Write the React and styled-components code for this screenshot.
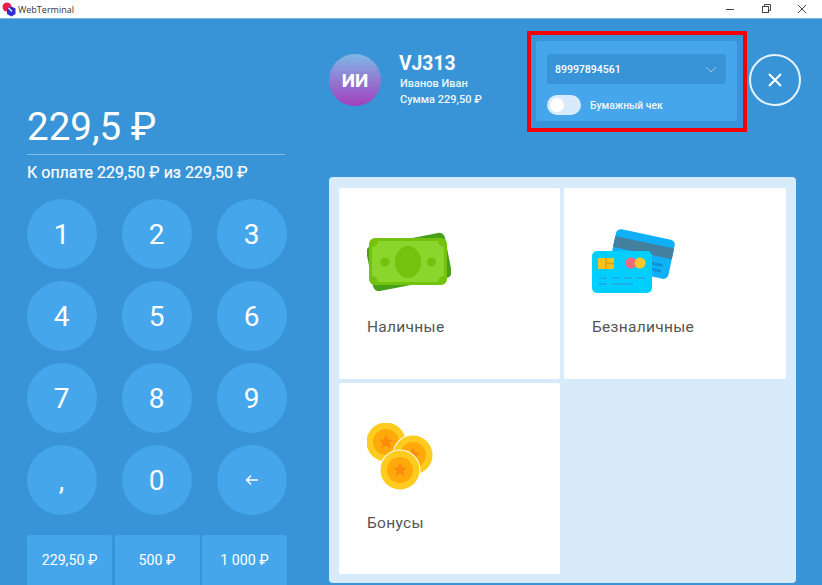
import React from "react";
import styled, { createGlobalStyle } from "styled-components";

const GlobalStyle = createGlobalStyle`
  html, body {
    margin: 0;
    padding: 0;
    height: 585px;
    overflow: hidden;
    background: #3894d6;
    font-family: Roboto, "Liberation Sans", sans-serif;
  }
`;

const Window = styled.div`
  width: 822px;
  height: 585px;
  display: flex;
  flex-direction: column;
  overflow: hidden;
`;

const TitleBar = styled.header`
  height: 18px;
  flex: none;
  display: flex;
  align-items: center;
  background: #fff;
  border-bottom: 1px solid #7fb6de;
  padding: 0 2px;
`;

const TitleText = styled.span`
  margin-left: 2px;
  font-family: "Open Sans", "Liberation Sans", sans-serif;
  font-size: 9px;
  color: #333;
`;

const WindowButtons = styled.div`
  margin-left: auto;
  display: flex;
`;

const WindowButton = styled.div`
  width: 36px;
  height: 18px;
  display: flex;
  align-items: center;
  justify-content: center;
`;

const Main = styled.main`
  flex: 1;
  display: flex;
  min-height: 0;
`;

const LeftColumn = styled.section`
  width: 302px;
  flex: none;
  box-sizing: border-box;
  padding: 84px 0 0 27px;
  display: flex;
  flex-direction: column;
`;

const Amount = styled.div`
  width: 258px;
  height: 52px;
  line-height: 48px;
  font-size: 38.5px;
  color: #fff;
  border-bottom: 1px solid #85bfe9;
`;

const ToPay = styled.div`
  margin-top: 8px;
  font-size: 16px;
  line-height: 19px;
  color: #fff;
  white-space: nowrap;
  -webkit-text-stroke: 0.2px #fff;
`;

const Keypad = styled.div`
  margin-top: 17px;
  display: grid;
  grid-template-columns: repeat(3, 70px);
  grid-auto-rows: 70px;
  column-gap: 25px;
  row-gap: 12px;
`;

const Key = styled.button`
  border: none;
  padding: 0 1px 0 0;
  border-radius: 50%;
  background: #45a6ec;
  color: #fff;
  font-family: inherit;
  font-size: 28px;
  display: flex;
  align-items: center;
  justify-content: center;
`;

const QuickRow = styled.div`
  margin-top: 20px;
  width: 260px;
  display: grid;
  grid-template-columns: 85px 85px 85px;
  column-gap: 2.5px;
`;

const QuickButton = styled.button`
  height: 50px;
  border: none;
  padding: 0;
  border-radius: 3px 3px 0 0;
  background: #45a6ec;
  color: #fff;
  font-family: inherit;
  font-size: 14.2px;
`;

const RightColumn = styled.section`
  flex: 1;
  box-sizing: border-box;
  padding: 12px 26px 1px 27px;
  display: flex;
  flex-direction: column;
`;

const TopRow = styled.div`
  display: flex;
  align-items: flex-start;
  height: 146px;
  flex: none;
`;

const Avatar = styled.div`
  width: 52px;
  height: 52px;
  margin-top: 23px;
  flex: none;
  border-radius: 50%;
  background: linear-gradient(180deg, #7fb8e6 0%, #a23fbc 100%);
  color: #fff;
  font-size: 19px;
  font-weight: 700;
  display: flex;
  align-items: center;
  justify-content: center;
`;

const Client = styled.div`
  margin: 21px 0 0 18px;
  width: 128px;
  flex: none;
  color: #fff;
`;

const ClientCode = styled.div`
  font-size: 19.3px;
  line-height: 24px;
  font-weight: 700;
`;

const ClientLine = styled.div`
  font-size: 11px;
  line-height: 16px;
  font-weight: 500;
  white-space: nowrap;
  color: #eef6fc;
  padding-left: 1px;
`;

const Highlight = styled.div`
  width: 220px;
  height: 101px;
  flex: none;
  box-sizing: border-box;
  border: 4px solid #f40009;
  padding: 6px 6px 6px 5px;
`;

const ReceiptPanel = styled.div`
  height: 80px;
  box-sizing: border-box;
  border-radius: 3px;
  background: #45a6ec;
  padding: 13px 11px 0;
`;

const PhoneSelect = styled.div`
  height: 30px;
  border-radius: 3px;
  background: #3894d6;
  display: flex;
  align-items: center;
  justify-content: space-between;
  padding: 0 9px 0 8px;
  color: #fff;
  font-size: 10.5px;
  font-weight: 500;
`;

const ToggleRow = styled.div`
  margin-top: 11px;
  display: flex;
  align-items: center;
  gap: 9px;
  color: #eef6fc;
  font-size: 10.3px;
  font-weight: 500;
`;

const Toggle = styled.div`
  width: 34px;
  height: 20px;
  border-radius: 10px;
  background: #d8ebfa;
  display: flex;
  align-items: center;
  padding-left: 2px;
  box-sizing: border-box;
`;

const ToggleKnob = styled.div`
  width: 14px;
  height: 14px;
  margin-left: 1px;
  border-radius: 50%;
  background: #fff;
`;

const CloseButton = styled.button`
  width: 52px;
  height: 52px;
  margin: 23px 0 0 2px;
  flex: none;
  padding: 0;
  border: 2px solid #e6f2fb;
  border-radius: 50%;
  background: transparent;
  display: flex;
  align-items: center;
  justify-content: center;
`;

const MethodsPanel = styled.div`
  width: 467px;
  height: 406px;
  box-sizing: border-box;
  padding: 11px 10px 9px;
  border-radius: 4px;
  background: #d8ebfa;
  display: grid;
  grid-template-columns: 221px 222px;
  grid-auto-rows: 191px;
  gap: 4px;
`;

const MethodCard = styled.div`
  background: #fff;
  border-radius: 2px;
  padding: ${(p) => p.$top}px 0 0 ${(p) => p.$left}px;
  display: flex;
  flex-direction: column;
  align-items: flex-start;
`;

const MethodIcon = styled.div`
  height: 70px;
  display: flex;
`;

const MethodLabel = styled.div`
  margin-top: ${(p) => p.$gap}px;
  font-size: 15.5px;
  line-height: 20px;
  letter-spacing: 0.3px;
  color: #555;
`;

const Logo = () => (
  <svg width="14" height="15" viewBox="0 0 14 15">
    <circle cx="5" cy="5" r="4.5" fill="#ee1c4e" />
    <path d="M5 6.5 L9.5 4.5 L13.5 6.5 V12 L9.5 14.5 L5 12 Z" fill="#2b2ecb" />
    <path d="M6.5 6 L10 9.5" stroke="#fff" strokeWidth="1.2" />
  </svg>
);

const MinimizeIcon = () => (
  <svg width="10" height="10" viewBox="0 0 10 10">
    <path d="M1 5.5 H9" stroke="#444" strokeWidth="1" />
  </svg>
);

const RestoreIcon = () => (
  <svg width="10" height="10" viewBox="0 0 10 10" fill="none" stroke="#444" strokeWidth="1">
    <rect x="1.5" y="2.5" width="6" height="6" />
    <path d="M3.5 2.5 V0.5 H9.5 V6.5 H7.5" />
  </svg>
);

const CloseSmallIcon = () => (
  <svg width="10" height="10" viewBox="0 0 10 10">
    <path d="M1 1 L9 9 M9 1 L1 9" stroke="#444" strokeWidth="1" />
  </svg>
);

const CashIcon = () => (
  <svg width="84" height="64" viewBox="0 0 84 64">
    <g transform="rotate(-11 42 32)">
      <rect x="2" y="9" width="80" height="46" rx="6" fill="#48a01a" />
    </g>
    <rect x="2" y="8" width="78" height="47" rx="6" fill="#73c20e" />
    <path
      d="M11 11 H71 A6 6 0 0 0 77 17 V46 A6 6 0 0 0 71 52 H11 A6 6 0 0 0 5 46 V17 A6 6 0 0 0 11 11 Z"
      fill="#8ad62d"
    />
    <ellipse cx="41" cy="32" rx="13" ry="16" fill="#73c20e" />
    <circle cx="18" cy="32" r="4.5" fill="#73c20e" />
    <circle cx="64.5" cy="32" r="4.5" fill="#73c20e" />
  </svg>
);

const CardsIcon = () => (
  <svg width="83" height="65" viewBox="0 0 83 65">
    <g transform="rotate(12 50 26)">
      <rect x="20" y="5" width="60" height="40" rx="5" fill="#0fb0f5" />
      <rect x="20" y="13" width="60" height="11" fill="#437f9e" />
      <path d="M60 32 H72 M60 38 H72" stroke="#0a8fd8" strokeWidth="2.5" />
    </g>
    <rect x="0" y="22" width="60" height="42" rx="5" fill="#00cffd" />
    <rect x="6" y="29" width="16" height="11" rx="1" fill="#f9c21a" />
    <path d="M14 29 V40 M14 34.5 H22" stroke="#eb9b0e" strokeWidth="1.5" />
    <circle cx="39" cy="34" r="5.5" fill="#f26a7a" />
    <circle cx="48" cy="34" r="5.5" fill="#fcc92c" />
    <path
      d="M7 49 H15 M20 49 H28 M32 49 H40 M45 49 H53 M7 55 H15 M20 55 H41"
      stroke="#1bb3e6"
      strokeWidth="2.2"
    />
  </svg>
);

const STAR =
  "M0 -7.5 L2.2 -2.6 L7.2 -2.2 L3.4 1.2 L4.6 6.4 L0 3.6 L-4.6 6.4 L-3.4 1.2 L-7.2 -2.2 L-2.2 -2.6 Z";

const Coin = ({ x, y }) => (
  <g transform={`translate(${x} ${y})`}>
    <circle r="19.5" fill="#ffcb1f" />
    <circle r="13" fill="#ffa90a" />
    <path d={STAR} fill="#ff8a0c" />
  </g>
);

const CoinsIcon = () => (
  <svg width="66" height="67" viewBox="0 0 66 67">
    <Coin x={19} y={19} />
    <circle cx={46} cy={32} r="20.5" fill="#fff" />
    <Coin x={46} y={32} />
    <circle cx={33} cy={47} r="20.5" fill="#fff" />
    <Coin x={33} y={47} />
  </svg>
);

const keys = ["1", "2", "3", "4", "5", "6", "7", "8", "9", ",", "0"];
const quickAmounts = ["229,50 ₽", "500 ₽", "1 000 ₽"];

export default function App() {
  return (
    <Window>
      <GlobalStyle />
      <TitleBar>
        <Logo />
        <TitleText>WebTerminal</TitleText>
        <WindowButtons>
          <WindowButton><MinimizeIcon /></WindowButton>
          <WindowButton><RestoreIcon /></WindowButton>
          <WindowButton><CloseSmallIcon /></WindowButton>
        </WindowButtons>
      </TitleBar>
      <Main>
        <LeftColumn>
          <Amount>229,5 ₽</Amount>
          <ToPay>К оплате 229,50 ₽ из 229,50 ₽</ToPay>
          <Keypad>
            {keys.map((k) => (
              <Key key={k}>{k}</Key>
            ))}
            <Key>
              <svg width="14" height="12" viewBox="0 0 14 12" fill="none" stroke="#fff" strokeWidth="1.5">
                <path d="M13 6 H2 M6 1.5 L1.5 6 L6 10.5" />
              </svg>
            </Key>
          </Keypad>
          <QuickRow>
            {quickAmounts.map((a) => (
              <QuickButton key={a}>{a}</QuickButton>
            ))}
          </QuickRow>
        </LeftColumn>
        <RightColumn>
          <TopRow>
            <Avatar>ИИ</Avatar>
            <Client>
              <ClientCode>VJ313</ClientCode>
              <ClientLine>Иванов Иван</ClientLine>
              <ClientLine>Сумма 229,50 ₽</ClientLine>
            </Client>
            <Highlight>
              <ReceiptPanel>
                <PhoneSelect>
                  89997894561
                  <svg width="12" height="7" viewBox="0 0 12 7" fill="none" stroke="#8ec6ee" strokeWidth="1">
                    <path d="M1 1 L6 6 L11 1" />
                  </svg>
                </PhoneSelect>
                <ToggleRow>
                  <Toggle><ToggleKnob /></Toggle>
                  Бумажный чек
                </ToggleRow>
              </ReceiptPanel>
            </Highlight>
            <CloseButton>
              <svg width="14" height="14" viewBox="0 0 14 14" stroke="#fff" strokeWidth="2">
                <path d="M1 1 L13 13 M13 1 L1 13" />
              </svg>
            </CloseButton>
          </TopRow>
          <MethodsPanel>
            <MethodCard $top={42} $left={28}>
              <MethodIcon><CashIcon /></MethodIcon>
              <MethodLabel $gap={17}>Наличные</MethodLabel>
            </MethodCard>
            <MethodCard $top={41} $left={28}>
              <MethodIcon><CardsIcon /></MethodIcon>
              <MethodLabel $gap={18}>Безналичные</MethodLabel>
            </MethodCard>
            <MethodCard $top={40} $left={28}>
              <MethodIcon><CoinsIcon /></MethodIcon>
              <MethodLabel $gap={20}>Бонусы</MethodLabel>
            </MethodCard>
          </MethodsPanel>
        </RightColumn>
      </Main>
    </Window>
  );
}
